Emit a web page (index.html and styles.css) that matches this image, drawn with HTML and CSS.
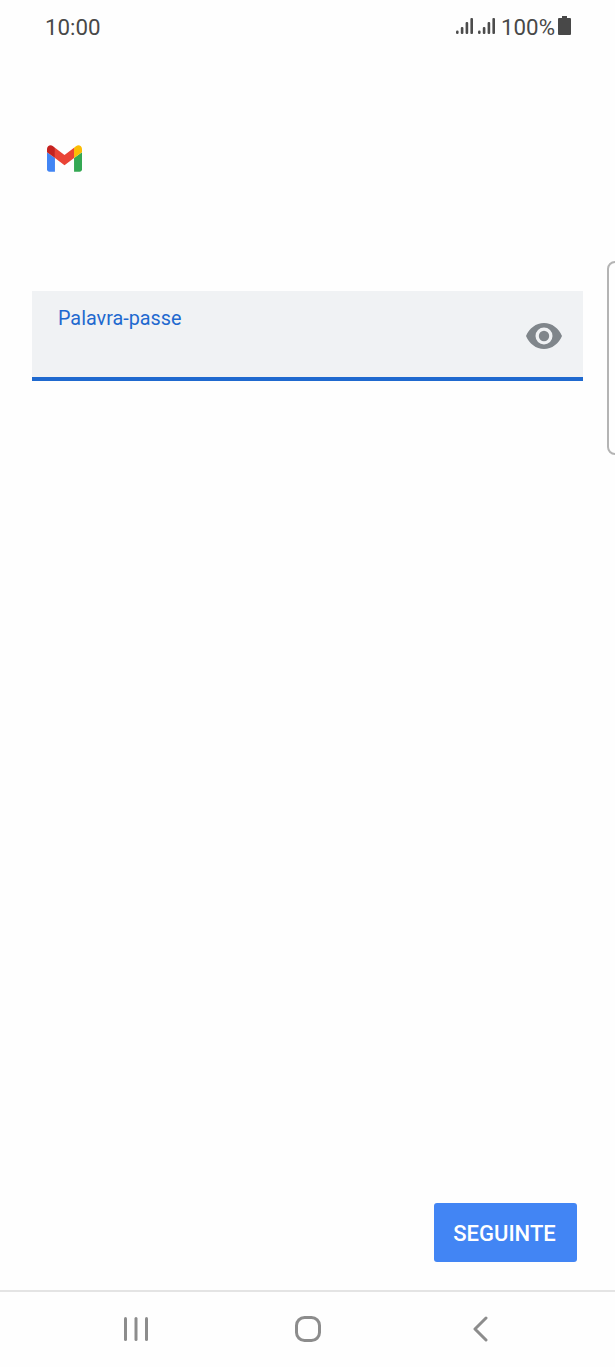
FILE: index.html
```html
<!DOCTYPE html>
<html lang="pt">
<head>
<meta charset="utf-8">
<title>Gmail</title>
<link rel="stylesheet" href="styles.css">
</head>
<body>
<div class="screen">
  <header class="status">
    <span class="time">10:00</span>
    <div class="status-right">
      <svg class="signal" viewBox="0 0 17 17"><g fill="#4c4c4c"><rect x="0" y="12.500" width="2.600" height="3.500" rx="1.200"/><rect x="4.800" y="9" width="2.600" height="7" rx="1"/><rect x="9.600" y="4" width="2.600" height="12" rx="1"/><rect x="14.400" y="0" width="2.600" height="16" rx="1"/></g></svg>
      <svg class="signal" viewBox="0 0 17 17"><g fill="#4c4c4c"><rect x="0" y="12.500" width="2.600" height="3.500" rx="1.200"/><rect x="4.800" y="9" width="2.600" height="7" rx="1"/><rect x="9.600" y="4" width="2.600" height="12" rx="1"/><rect x="14.400" y="0" width="2.600" height="16" rx="1"/></g></svg>
      <span class="pct">100%</span>
      <svg class="battery" viewBox="0 0 13 19"><path fill="#484848" d="M4 0h5v2h3a1 1 0 0 1 1 1v15a1 1 0 0 1-1 1H1a1 1 0 0 1-1-1V3a1 1 0 0 1 1-1h3z"/></svg>
    </div>
  </header>

  <main class="content">
    <svg class="logo" viewBox="52 42 88 66">
      <path fill="#4285f4" d="M58 108h14V74L52 59v43c0 3.320 2.690 6 6 6"/>
      <path fill="#34a853" d="M120 108h14c3.320 0 6-2.690 6-6V59l-20 15"/>
      <path fill="#fbbc04" d="M120 48v26l20-15v-8c0-7.420-8.470-11.650-14.400-7.200"/>
      <path fill="#ea4335" d="M72 74V48l24 18 24-18v26L96 92"/>
      <path fill="#c5221f" d="M52 51v8l20 15V48l-5.600-4.200c-5.940-4.450-14.400-.220-14.400 7.200"/>
    </svg>
    <div class="field">
      <label class="field-label">Palavra-passe</label>
      <svg class="eye" viewBox="0 0 36 26">
        <path fill="#80868b" fill-rule="evenodd" d="M18 0C10 0 3.200 5.400 0 13c3.200 7.600 10 13 18 13s14.800-5.400 18-13C32.800 5.400 26 0 18 0zm0 21.500a8.500 8.500 0 1 1 0-17 8.500 8.500 0 0 1 0 17z"/>
        <circle cx="18" cy="13" r="5.200" fill="#80868b"/>
      </svg>
    </div>
    <div class="actions">
      <button class="next" type="button">SEGUINTE</button>
    </div>
  </main>

  <nav class="navbar">
    <svg class="nav-recent" viewBox="0 0 24 24"><g fill="#8c8c8c"><rect x="0" y="0" width="3" height="24" rx="1.500"/><rect x="10.500" y="0" width="3" height="24" rx="1.500"/><rect x="21" y="0" width="3" height="24" rx="1.500"/></g></svg>
    <svg class="nav-home" viewBox="0 0 26 26"><rect x="1.500" y="1.500" width="23" height="23" rx="8" fill="none" stroke="#8c8c8c" stroke-width="3"/></svg>
    <svg class="nav-back" viewBox="0 0 16 26"><path d="M14 2 3 13l11 11" fill="none" stroke="#8c8c8c" stroke-width="3" stroke-linecap="round" stroke-linejoin="round"/></svg>
  </nav>

  <div class="edge-handle"></div>
</div>
</body>
</html>
```
FILE: styles.css
```css
* { box-sizing: border-box; }
html, body { margin: 0; padding: 0; background: #fefefe; }
body { font-family: Roboto, "Liberation Sans", sans-serif; }

.screen {
  position: relative;
  width: 615px;
  height: 1367px;
  display: flex;
  flex-direction: column;
  overflow: hidden;
}

.status {
  height: 55px;
  flex: none;
  display: flex;
  align-items: center;
  justify-content: space-between;
  padding: 0 44px 2px 45px;
  color: #484848;
}
.time { font-size: 22.300px; }
.status-right { display: flex; align-items: center; }
.signal { width: 17px; height: 17px; margin-right: 5px; }
.pct { font-size: 22.300px; margin-left: 1px; margin-right: 3px; }
.battery { width: 13px; height: 19px; margin-top: -2px; }

.content {
  flex: 1;
  display: flex;
  flex-direction: column;
  padding: 90px 38px 28px 32px;
}
.logo { width: 35px; height: 27px; margin-left: 15px; flex: none; }

.field {
  margin-top: 119px;
  width: 551px;
  height: 90px;
  flex: none;
  background: #f0f2f4;
  border-bottom: 4px solid #1f69cf;
  padding: 16px 21px 0 26px;
  display: flex;
  justify-content: space-between;
}
.field-label { font-size: 19.800px; line-height: 24px; color: #1f69cf; }
.eye { width: 36px; height: 26px; margin-top: 16px; }

.actions { margin-top: auto; display: flex; justify-content: flex-end; }
.next {
  width: 143px;
  height: 59px;
  border: 0;
  border-radius: 3px;
  background: #4285f4;
  color: #fff;
  font-family: inherit;
  font-size: 22px;
  font-weight: 500;
  padding: 2px 2px 0 0;
}

.navbar {
  height: 77px;
  flex: none;
  border-top: 2px solid #e4e4e4;
  display: flex;
  align-items: center;
  padding-bottom: 1px;
  position: relative;
}
.nav-recent { width: 24px; height: 24px; margin-left: 124px; }
.nav-home { width: 26px; height: 26px; margin-left: 147px; }
.nav-back { width: 16px; height: 26px; margin-left: 151px; }

.edge-handle {
  position: absolute;
  left: 607px;
  top: 261px;
  width: 20px;
  height: 194px;
  border: 2px solid #b4b4b4;
  border-radius: 8px;
  background: #fefefe;
}
```
